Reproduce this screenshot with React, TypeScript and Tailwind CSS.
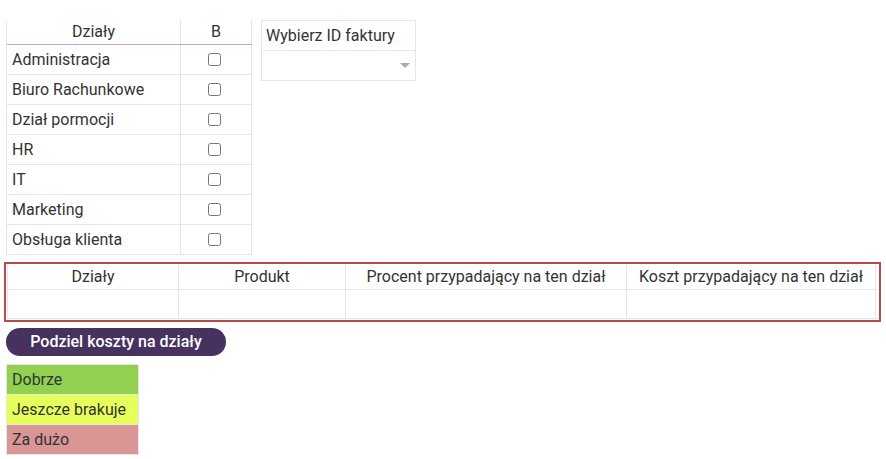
import React from "react";

const depts = [
  "Administracja",
  "Biuro Rachunkowe",
  "Dział pormocji",
  "HR",
  "IT",
  "Marketing",
  "Obsługa klienta",
];

export default function App() {
  return (
    <div className="w-[886px] h-[459px] bg-white text-[#333333] text-[16px] font-['Roboto',sans-serif] pt-[20px] pl-[4px]">
      <div className="flex items-start gap-[9px] pl-[2px]">
        <div className="w-[246px] border-l border-[#e6e6e6]">
          <div className="flex h-[25px] border-b border-[#c9a3cf]">
            <div className="w-[174px] border-r border-[#e6e6e6] text-center leading-[24px]">Działy</div>
            <div className="w-[71px] border-r border-[#e6e6e6] text-center leading-[24px]">B</div>
          </div>
          {depts.map((d) => (
            <div key={d} className="flex h-[30px] border-b border-[#e6e6e6]">
              <div className="w-[174px] border-r border-[#e6e6e6] pl-[5px] leading-[29px]">{d}</div>
              <div className="w-[71px] border-r border-[#e6e6e6] flex items-center justify-center pr-[3px]">
                <input type="checkbox" className="w-[13px] h-[13px] m-0" />
              </div>
            </div>
          ))}
        </div>
        <div className="w-[155px] border border-[#e6e6e6]">
          <div className="h-[30px] border-b border-[#e6e6e6] pl-[4px] leading-[29px]">Wybierz ID faktury</div>
          <div className="h-[29px] flex items-center justify-end pr-[5px]">
            <svg width="10" height="5" viewBox="0 0 10 5">
              <polygon points="0,0 10,0 5,5" fill="#aaaaaa" />
            </svg>
          </div>
        </div>
      </div>

      <div className="mt-[7px] w-[877px] border-2 border-[#b94a48] p-px">
        <div className="flex h-[25px] border-b border-[#c9a3cf] border-l border-[#e6e6e6]">
          <div className="w-[171px] border-r border-[#e6e6e6] text-center leading-[24px]">Działy</div>
          <div className="w-[167px] border-r border-[#e6e6e6] text-center leading-[24px]">Produkt</div>
          <div className="w-[281px] border-r border-[#e6e6e6] text-center leading-[24px]">Procent przypadający na ten dział</div>
          <div className="w-[249px] border-r border-[#e6e6e6] text-center leading-[24px]">Koszt przypadający na ten dział</div>
        </div>
        <div className="flex h-[29px] border-b border-l border-[#e6e6e6]">
          <div className="w-[171px] border-r border-[#e6e6e6]"></div>
          <div className="w-[167px] border-r border-[#e6e6e6]"></div>
          <div className="w-[281px] border-r border-[#e6e6e6]"></div>
          <div className="w-[249px] border-r border-[#e6e6e6]"></div>
        </div>
      </div>

      <div className="ml-[2px] mt-[6px]">
        <button className="w-[220px] h-[28px] rounded-full bg-[#46315f] text-white font-medium text-[16px] leading-[28px] text-center">
          Podziel koszty na działy
        </button>
      </div>

      <div className="ml-[2px] mt-[8px] w-[133px] border border-[#e6e6e6]">
        <div className="h-[30px] bg-[#92d050] border-b border-[#e6e6e6] pl-[5px] leading-[29px]">Dobrze</div>
        <div className="h-[30px] bg-[#e6ff5a] border-b border-[#e6e6e6] pl-[5px] leading-[29px]">Jeszcze brakuje</div>
        <div className="h-[29px] bg-[#da9694] pl-[5px] leading-[29px]">Za dużo</div>
      </div>
    </div>
  );
}
